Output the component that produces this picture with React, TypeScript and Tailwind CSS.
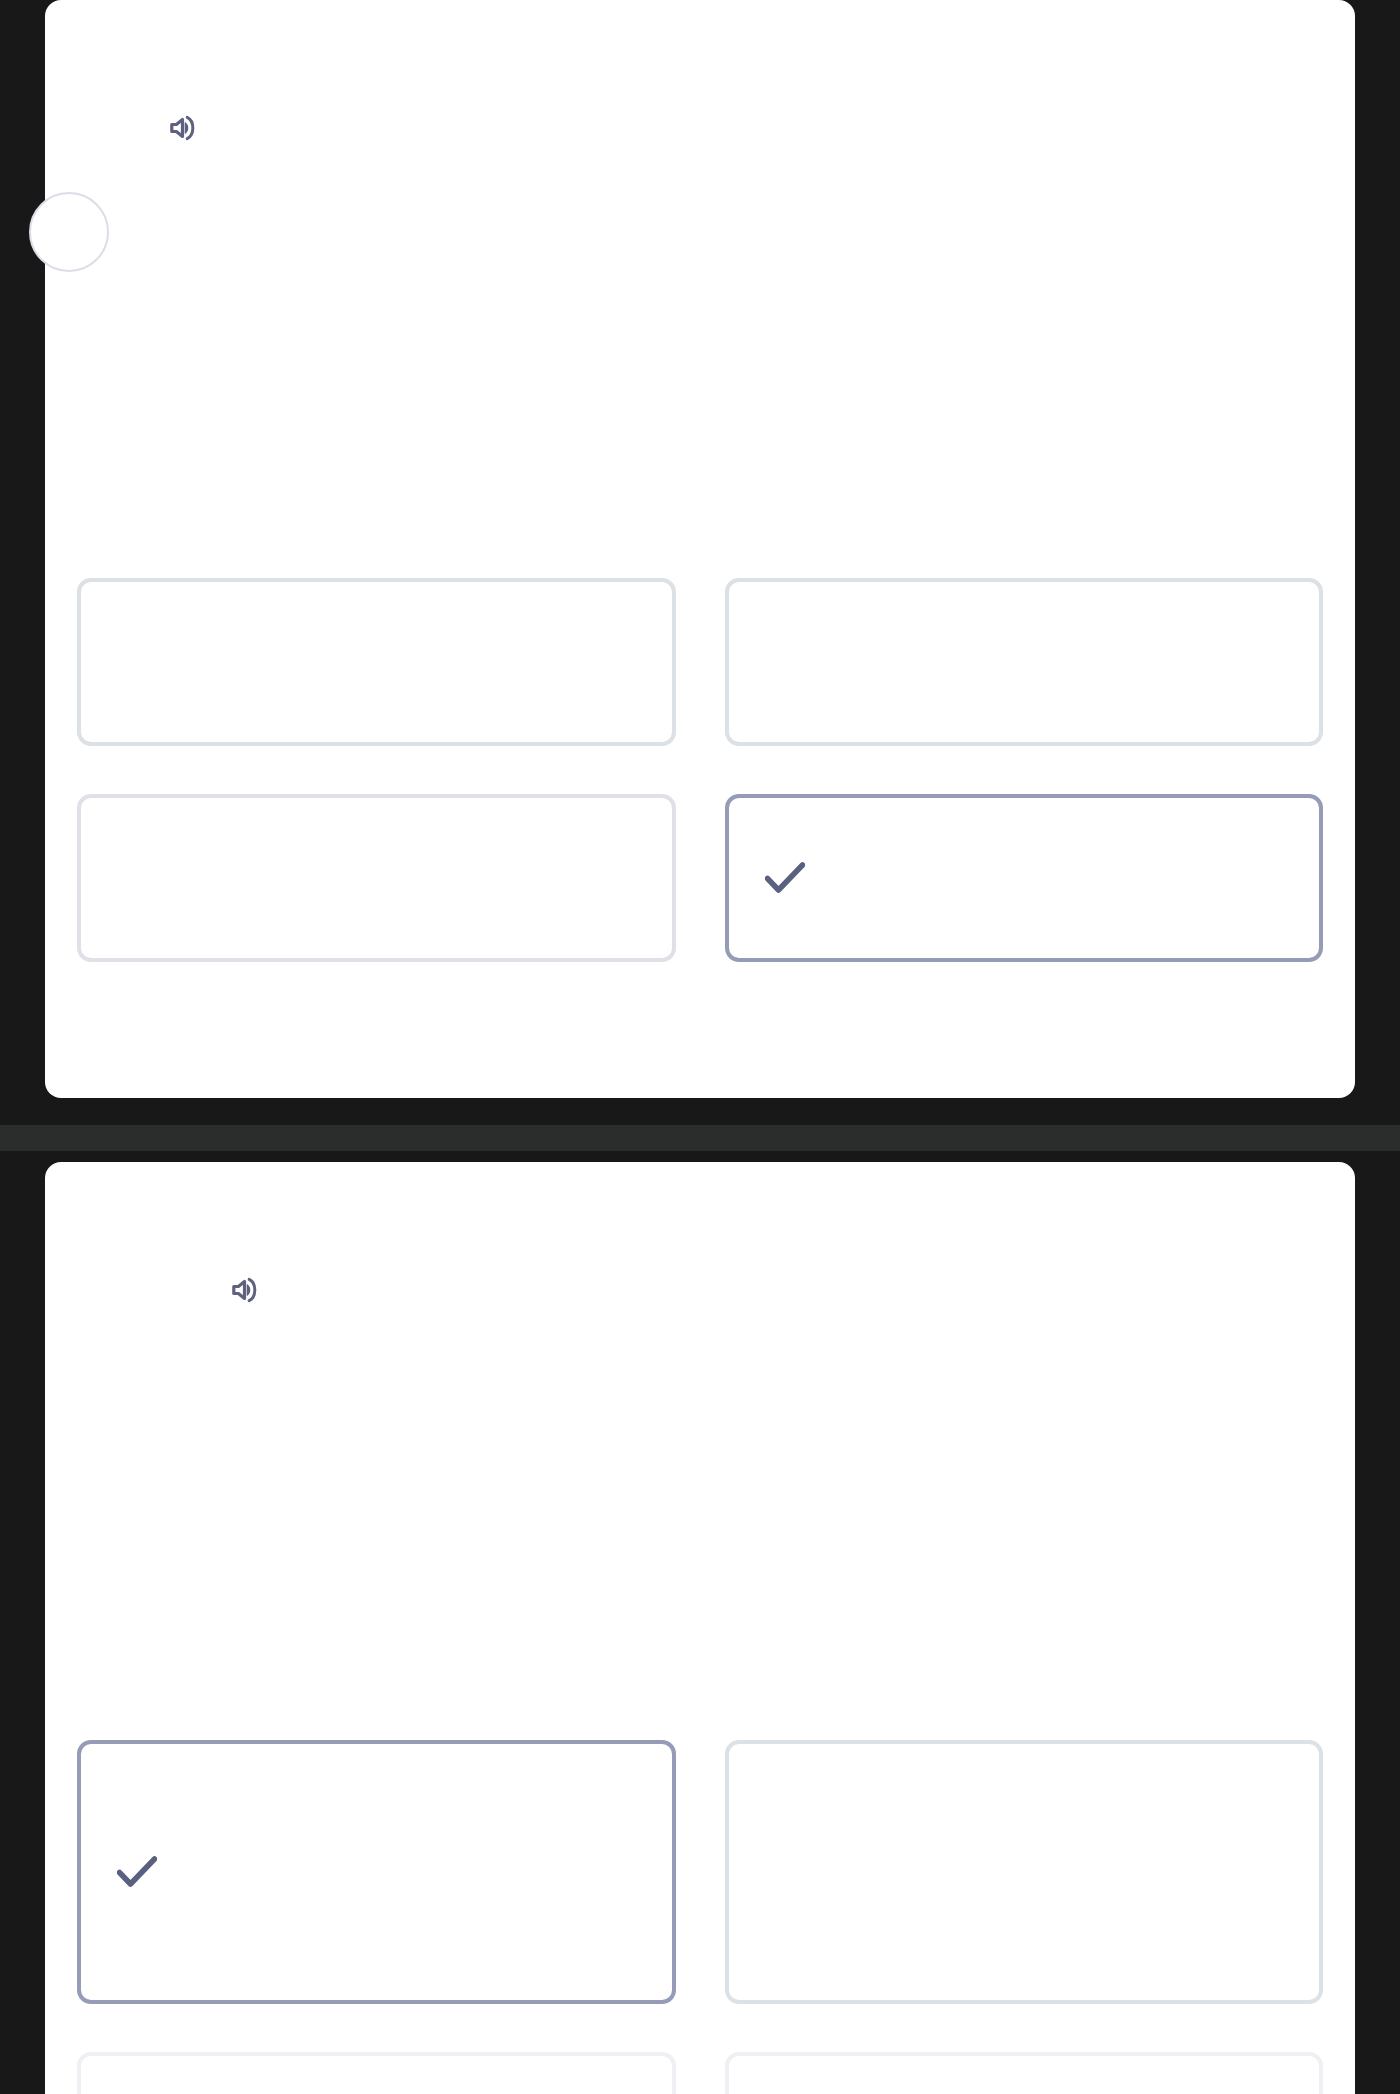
import React from 'react';

type OptionState = 'idle' | 'soft' | 'faded' | 'selected';

const borderByState: Record<OptionState, string> = {
    idle: 'border-[#dce1e5]',
    soft: 'border-[#e0e1e8]',
    faded: 'border-[#eef0f3]',
    selected: 'border-[#969bb6]',
};

const SpeakerIcon: React.FC = () => (
    <svg width="26" height="26" viewBox="0 0 26 26" fill="none" className="text-[#5e6280]">
        <path d="M1.8 9.5h4.6l6.1-5v17l-6.1-5H1.8z" stroke="currentColor" strokeWidth="3.200" strokeLinejoin="round" />
        <path d="M15.4 8c3 2.700 3 7.300 0 10z" fill="currentColor" stroke="currentColor" strokeWidth="1.400" strokeLinejoin="round" />
        <path d="M17.2 2.400c7.500 3.600 7.500 17.600 0 21.200" stroke="currentColor" strokeWidth="3" strokeLinecap="round" />
    </svg>
);

const CheckIcon: React.FC = () => (
    <svg width="40" height="34" viewBox="0 0 40 34" fill="none" className="text-[#5a6080]">
        <path d="M2.500 17.500l11 11.500L37.500 4" stroke="currentColor" strokeWidth="5.500" strokeLinecap="round" strokeLinejoin="round" />
    </svg>
);

const Option: React.FC<{ state: OptionState; heightClass: string }> = ({ state, heightClass }) => (
    <div className={`flex items-center rounded-[14px] border-4 bg-white pl-[36px] ${heightClass} ${borderByState[state]}`}>
        {state === 'selected' && <CheckIcon />}
    </div>
);

export default function App() {
    return (
        <div className="h-[2094px] overflow-hidden bg-[#181818]">
            {/* first question */}
            <div className="relative mx-[45px] h-[1098px] rounded-2xl bg-white px-[32px] pt-[115px]">
                <div className="absolute left-[-16px] top-[192px] h-[80px] w-[80px] rounded-full border-2 border-[#dcdde6] bg-white" />
                <div className="pl-[93px]">
                    <SpeakerIcon />
                </div>
                <div className="mt-[437px] grid grid-cols-2 gap-x-[49px] gap-y-[48.5px]">
                    <Option state="idle" heightClass="h-[167.5px]" />
                    <Option state="idle" heightClass="h-[167.5px]" />
                    <Option state="soft" heightClass="h-[167.5px]" />
                    <Option state="selected" heightClass="h-[167.5px]" />
                </div>
            </div>

            <div className="mt-[27px] h-[26px] bg-[#2a2d2c]" />

            {/* second question */}
            <div className="mx-[45px] mt-[11px] rounded-2xl bg-white px-[32px] pt-[115px]">
                <div className="pl-[155px]">
                    <SpeakerIcon />
                </div>
                <div className="mt-[437px] grid grid-cols-2 gap-x-[49px] gap-y-[48.5px]">
                    <Option state="selected" heightClass="h-[263.5px]" />
                    <Option state="idle" heightClass="h-[263.5px]" />
                    <Option state="faded" heightClass="h-[263.5px]" />
                    <Option state="faded" heightClass="h-[263.5px]" />
                </div>
            </div>
        </div>
    );
}
